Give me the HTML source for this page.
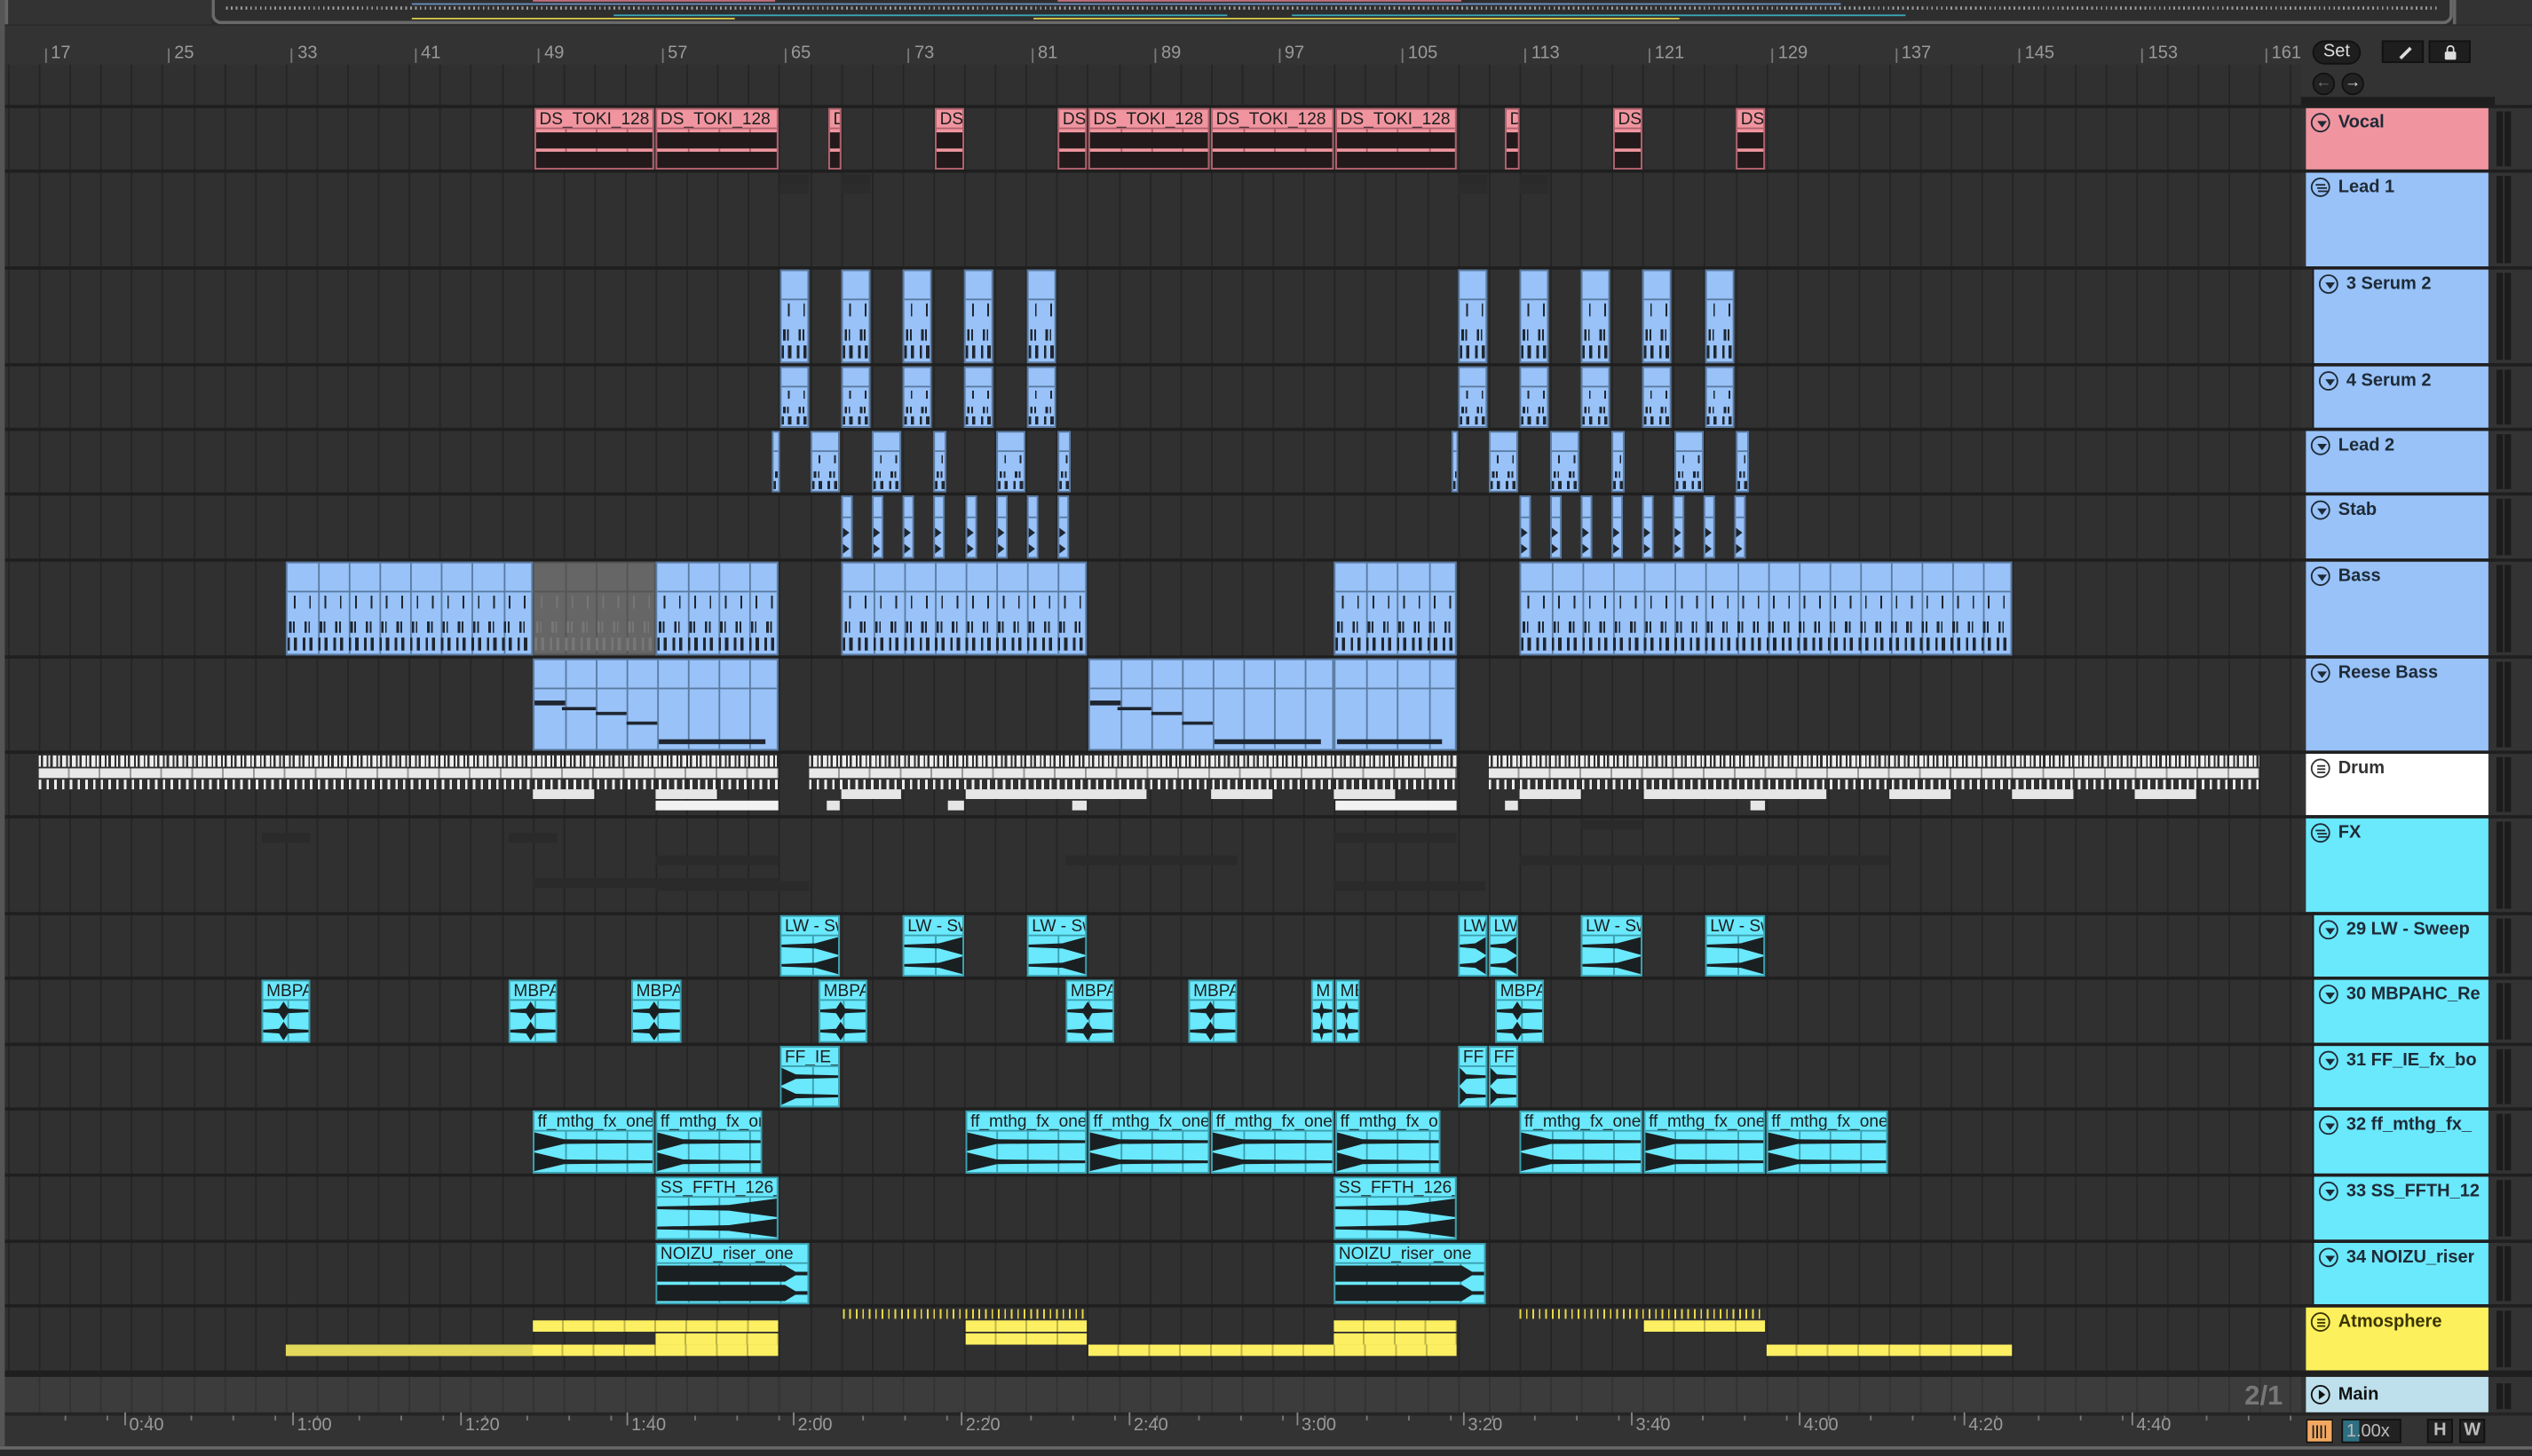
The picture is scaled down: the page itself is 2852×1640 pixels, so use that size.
<!DOCTYPE html>
<html><head><meta charset="utf-8">
<style>
html,body{margin:0;padding:0;background:#2a2a2a;overflow:hidden;width:2852px;height:1640px}
#w{position:absolute;left:0;top:0;width:1568px;height:902px;transform:scale(1.81888,1.81818);transform-origin:0 0;background:#333;font-family:"Liberation Sans",sans-serif;overflow:hidden}
.a{position:absolute;box-sizing:border-box}
.lbl{position:absolute;left:2px;top:0;font-size:10.5px;line-height:11px;color:#1d1d1d;white-space:nowrap;overflow:hidden;right:0}
.hd{font-weight:bold;font-size:11px;color:#1e2a36;white-space:nowrap;overflow:hidden}
.ico{position:absolute;width:12px;height:12px;border:1.2px solid #1f2b36;border-radius:50%;box-sizing:border-box}
.rl{position:absolute;top:27px;font-size:11px;color:#9a9a9a}
.rl:before{content:"";position:absolute;left:-4px;top:3px;width:1px;height:9px;background:#777}
.tl{position:absolute;top:877px;font-size:11px;color:#9a9a9a}
.tl:before{content:"";position:absolute;left:-3px;top:-2px;width:1px;height:8px;background:#888}
</style></head><body>
<div id="w"></div>
<script>
const W=document.getElementById('w');
function d(x,y,w,h,st,html){const e=document.createElement('div');e.className='a';e.style.cssText=`left:${x}px;top:${y}px;width:${w}px;height:${h}px;`+(st||'');if(html)e.innerHTML=html;W.appendChild(e);return e;}
const X0=24.5,CW=19.1;
d(0,0,1568,16,'background:#2b2b2b');
d(3,0,128,15,'background:#333;border-left:2px solid #666');
d(131,0,1388,15,'border:2px solid #6a6a6a;border-top:none;border-radius:0 0 6px 6px;background:#2e2e2e');
d(1519,0,49,15,'background:#333;border-left:2px solid #666');
d(140,4,1370,2,'background:repeating-linear-gradient(90deg,#ccc 0 1px,transparent 1px 3px);opacity:.7');
d(255,2,720,1,'background:#6a8fc0');d(760,2,380,1,'background:#6a8fc0');
d(255,11,200,1,'background:#d6c84a');d(640,11,400,1,'background:#d6c84a');
d(380,9,380,1,'background:#3aa7b8');d(800,9,380,1,'background:#3aa7b8');
d(330,0,150,1,'background:#c07080');d(655,0,250,1,'background:#c07080');
d(0,16,1428,24,'background:#333');
W.insertAdjacentHTML('beforeend','<div class="a" style="left:0;top:0;width:3px;height:902px;background:#555"></div>');
d(3,40,1422,813,'background:#303030');
for(let k=-1;k<75;k++){const x=X0+k*CW-0.5;if(x<3||x>1424)continue;d(x,40,1,835,'background:#252525');}
for(let b=17;b<=161;b+=8){const x=X0+(b-17)*9.55+7;W.insertAdjacentHTML('beforeend',`<div class="rl" style="left:${x}px">${b}</div>`);}
const P='#f0959f',B='#98c2f8',C='#6ae8fc',Y='#fcf05c';
const T=[[65,105,'Vocal',P,0,'tri'],[105,165,'Lead 1',B,0,'grp'],[165,225,'3 Serum 2',B,1,'tri'],[225,265,'4 Serum 2',B,1,'tri'],[265,305,'Lead 2',B,0,'tri'],[305,346,'Stab',B,0,'tri'],[346,406,'Bass',B,0,'tri'],[406,465,'Reese Bass',B,0,'tri'],[465,505,'Drum','#ffffff',0,'grp3'],[505,565,'FX',C,0,'grp'],[565,605,'29 LW - Sweep',C,1,'tri'],[605,646,'30 MBPAHC_Re',C,1,'tri'],[646,686,'31 FF_IE_fx_bo',C,1,'tri'],[686,727,'32 ff_mthg_fx_',C,1,'tri'],[727,768,'33 SS_FFTH_12',C,1,'tri'],[768,808,'34 NOIZU_riser',C,1,'tri'],[808,849,'Atmosphere',Y,0,'grp3']];
d(1425,40,143,862,'background:#333');
d(1425,60,120,5,'background:#1e1e1e');
T.forEach(t=>{
 const [y1,y2,n,c,ch,ic]=t;
 d(3,y1,1565,2,'background:#1f1f1f');
 const hx=ch?1433:1428;
 if(ch) d(1432,y1,2,y2-y1,'background:#1e1e1e');
 const col=n=='Drum'?'#333':(c==Y?'#3a3400':'#1e2a36');
 let svg='';
 if(ic=='tri') svg='<div style="position:absolute;left:2.5px;top:3.5px;width:0;height:0;border-left:3px solid transparent;border-right:3px solid transparent;border-top:4px solid '+col+'"></div>';
 else if(ic=='grp') svg='<div style="position:absolute;left:2px;top:3px;width:6px;height:1.2px;background:'+col+';box-shadow:1px 2px 0 '+col+',1.5px 4px 0 '+col+'"></div>';
 else svg='<div style="position:absolute;left:2.5px;top:2.5px;width:5px;height:1.2px;background:'+col+';box-shadow:0 2px 0 '+col+',0 4px 0 '+col+'"></div>';
 d(hx,y1+2,1541-hx,y2-y1-2,'background:'+c,`<div class="ico" style="left:3px;top:3px;border-color:${col}">${svg}</div><div class="hd" style="position:absolute;left:20px;top:3px;color:${col}">${n}</div>`);
 d(1546,y1+4,4,y2-y1-6,'background:#1c1c1c');d(1551,y1+4,4,y2-y1-6,'background:#1c1c1c');
});
d(3,849,1565,4,'background:#1f1f1f');
d(3,853,1422,22,'background:#3c3c3c');
for(let k=0;k<75;k++){const x=X0+k*CW-0.5;if(x>1424)break;d(x,853,1,22,'background:#333');}
d(1428,853,113,22,'background:#bde0ec','<div class="ico" style="left:3px;top:5px;border-color:#111"><div style="position:absolute;left:3.5px;top:2px;border-top:3px solid transparent;border-bottom:3px solid transparent;border-left:4.5px solid #111"></div></div><div class="hd" style="position:absolute;left:20px;top:5px;color:#111">Main</div>');
d(1546,857,4,16,'background:#1c1c1c');d(1551,857,4,16,'background:#1c1c1c');
d(1390,855,35,18,'','<div style="font-size:17px;color:#777;font-weight:bold">2/1</div>');
d(3,875,1565,27,'background:#333;border-top:2px solid #242424');
d(0,896,1568,6,'background:#2a2a2a;border-top:2px solid #666');
[['0:40',80],['1:00',184],['1:20',288],['1:40',391],['2:00',494],['2:20',598],['2:40',702],['3:00',806],['3:20',909],['3:40',1013],['4:00',1117],['4:20',1219],['4:40',1323]].forEach(a=>W.insertAdjacentHTML('beforeend',`<div class="tl" style="left:${a[1]}px">${a[0]}</div>`));
for(let x=40;x<1420;x+=26)d(x,877,1,3,'background:#777');
d(1432,25,30,15,'background:#1e1e1e;border:1px solid #111;border-radius:8px','<div style="font-size:11px;color:#ddd;text-align:center;line-height:13px">Set</div>');
d(1475,25,26,14,'background:#1e1e1e;border:1px solid #111','<div style="position:absolute;left:9px;top:6px;width:9px;height:1.5px;background:#ddd;transform:rotate(-45deg)"></div>');
d(1504,25,26,14,'background:#1e1e1e;border:1px solid #111','<div style="position:absolute;left:9px;top:6px;width:7px;height:5px;background:#ddd;border-radius:1px"></div><div style="position:absolute;left:10px;top:2px;width:3px;height:4px;border:1.2px solid #ddd;border-bottom:none;border-radius:3px 3px 0 0"></div>');
d(1432,45,14,14,'background:#222;border:1px solid #111;border-radius:50%','<div style="font-size:10px;color:#777;text-align:center;line-height:12px">&#x2190;</div>');
d(1450,45,14,14,'background:#222;border:1px solid #111;border-radius:50%','<div style="font-size:10px;color:#ddd;text-align:center;line-height:12px">&#x2192;</div>');
d(1428,879,17,15,'background:#f2a860;border:1px solid #111','<div style="position:absolute;left:3px;top:3px;width:9px;height:8px;background:repeating-linear-gradient(90deg,#222 0 1px,transparent 1px 2.5px)"></div>');
d(1450,879,37,15,'background:#222;border:1px solid #111','<div style="position:absolute;left:0;top:0;width:10px;height:13px;background:#2f6f82"></div><div style="position:absolute;left:2px;top:1px;font-size:11px;color:#bbb">1.00x</div>');
d(1503,879,16,15,'background:#222;border:1px solid #111','<div style="font-size:11px;color:#bbb;text-align:center;font-weight:bold">H</div>');
d(1523,879,16,15,'background:#222;border:1px solid #111','<div style="font-size:11px;color:#bbb;text-align:center;font-weight:bold">W</div>');

let POLYS='';const FULLS=[];
function lanePoly(type,x,y,w,h){
 if(type=='full'){FULLS.push([x,y+1,w,h-1]);return;}
 const cy=y+h/2,a=h/2;const X=f=>(x+f*w).toFixed(1);
 let pts;
 if(type=='sweep')pts=[[0,-.15],[.6,-.3],[1,-1],[1,1],[.6,.3],[0,.15]];
 else if(type=='fade')pts=[[0,-1],[.25,-.25],[1,-.15],[1,.15],[.25,.25],[0,1]];
 else if(type=='pinch')pts=[[0,-.15],[.35,-.25],[.45,-1],[.55,-.25],[1,-.15],[1,.15],[.55,.25],[.45,1],[.35,.25],[0,.15]];
 else pts=[[0,-.9],[.85,-.9],[.92,-.2],[1,-.2],[1,.2],[.92,.2],[.85,.9],[0,.9]];
 POLYS+=`<polygon fill="#1a2022" points="${pts.map(p=>X(p[0])+','+(cy+p[1]*a).toFixed(1)).join(' ')}"/>`;
}
function gridIn(x1,x2,col){let s='';for(let k=0;k<80;k++){const gx=X0+k*CW-0.5;if(gx>x1+1&&gx<x2-1)s+=`<div style="position:absolute;left:${gx-x1}px;top:0;bottom:0;width:1px;background:${col}"></div>`;}return s;}
function audio(x1,x2,y1,y2,col,lbl,type,bd){
 const w=x2-x1,h=y2-y1;const hh=Math.round(h*0.28);const bh=h-2-hh-1;
 d(x1,y1,w,h,`background:${col};border:1px solid ${bd};overflow:hidden`,
 `<div class="lbl" style="top:1px">${lbl}</div><div style="position:absolute;left:0;right:0;top:${hh}px;height:1px;background:${bd}"></div><div style="position:absolute;left:0;right:0;top:${hh+1}px;bottom:0">${gridIn(x1,x2,bd)}</div>`);
 const by=y1+1+hh+1,lh=bh/2;
 lanePoly(type,x1+1,by+0.5,w-2,lh-1);lanePoly(type,x1+1,by+lh+0.5,w-2,lh-1);
}
function midi(x1,x2,y1,y2,kind,muted){
 const w=x2-x1,h=y2-y1;const hh=Math.round(h*0.3);
 const bg=muted?'#666':B,bd=muted?'#555':'#5a7aa0',nc=muted?'#777':'#1f2630';
 let notes='';
 if(kind=='drumy'){
  notes=`<div style="position:absolute;left:0;right:0;top:${hh+3}px;height:${h*0.14}px;background:repeating-linear-gradient(90deg,transparent 0 4px,${nc} 4px 5px,transparent 5px 9.5px)"></div>
  <div style="position:absolute;left:0;right:0;top:${h*0.62}px;height:${h*0.13}px;background:repeating-linear-gradient(90deg,transparent 0 1px,${nc} 1px 2.5px,transparent 2.5px 3.5px,${nc} 3.5px 4.5px,transparent 4.5px 9.5px)"></div>
  <div style="position:absolute;left:0;right:0;top:${h*0.79}px;height:${h*0.14}px;background:repeating-linear-gradient(90deg,${nc} 0 1.5px,transparent 1.5px 4px,${nc} 4px 6px,transparent 6px 9.5px)"></div>`;
 } else if(kind=='stab'){
  notes=`<div style="position:absolute;left:0;top:${h*0.48}px;width:0;height:0;border-top:3px solid transparent;border-bottom:3px solid transparent;border-left:4px solid ${nc}"></div><div style="position:absolute;left:0;top:${h*0.75}px;width:0;height:0;border-top:3px solid transparent;border-bottom:3px solid transparent;border-left:4px solid ${nc}"></div>`;
 }
 return d(x1,y1,w,h,`background:${bg};border:1px solid ${bd};overflow:hidden`,`<div style="position:absolute;left:0;right:0;top:${hh}px;height:1px;background:${bd}"></div>${gridIn(x1,x2,bd)}${notes}`);
}
const pv=[[331,405,'DS_TOKI_128'],[406,482,'DS_TOKI_128'],[513,521,'D'],[579,597,'DS'],[655,673,'DS'],[674,749,'DS_TOKI_128'],[750,826,'DS_TOKI_128'],[827,902,'DS_TOKI_128'],[932,941,'D'],[999,1017,'DS'],[1075,1093,'DS']];
pv.forEach(c=>audio(c[0],c[1],67,105,P,c[2],'full','#b0606c'));
[[483,501],[521,539],[903,921],[941,959]].forEach(c=>{d(c[0],108,c[1]-c[0],6,'background:#2a2a2a');d(c[0],114,c[1]-c[0],6,'background:#2c2c2c')});
const s1=[[483,501],[521,539],[559,577],[597,615],[636,654],[903,921],[941,959],[979,997],[1017,1035],[1056,1074]];
s1.forEach(c=>{midi(c[0],c[1],167,225,'drumy');midi(c[0],c[1],227,265,'drumy');});
[[478,483],[502,520],[540,558],[578,586],[617,635],[655,663],[899,903],[922,940],[960,978],[998,1006],[1037,1055],[1075,1083]].forEach(c=>midi(c[0],c[1],267,305,'drumy'));
[521,540,559,578,598,617,636,655,941,960,979,998,1017,1036,1055,1074].forEach(x=>midi(x,x+7,307,346,'stab'));
[[177,330],[406,482],[521,673],[826,902],[941,1246]].forEach(c=>midi(c[0],c[1],348,406,'drumy'));
midi(330,406,348,406,'drumy',true);
function reese(x1,x2){const e=midi(x1,x2,408,465,'reese');const h=57;
 const segs=[[0,19,0.44],[17,38,0.5],[38,57,0.56],[57,76,0.66]];
 segs.forEach(s=>{e.insertAdjacentHTML('beforeend',`<div style="position:absolute;left:${s[0]}px;width:${s[1]-s[0]}px;top:${h*s[2]}px;height:2.5px;background:#1f2630"></div>`)});
 e.insertAdjacentHTML('beforeend',`<div style="position:absolute;left:77px;width:66px;top:${h*0.86}px;height:2.5px;background:#1f2630"></div>`);}
reese(330,482);reese(674,826);midi(826,902,408,465,'reese').insertAdjacentHTML('beforeend','<div style="position:absolute;left:1px;width:65px;top:49px;height:2.5px;background:#1f2630"></div>');
function drum(x1,x2){
 const w=x2-x1;
 d(x1,468,w,7,'background:repeating-linear-gradient(90deg,#eee 0 1.2px,transparent 1.2px 2.6px,#eee 2.6px 5px,transparent 5px 6px)');
 d(x1,476,w,6,'background:repeating-linear-gradient(90deg,#e8e8e8 0 18px,#999 18px 19.1px)');
 d(x1,483,w,6,'background:repeating-linear-gradient(90deg,#eee 0 1.5px,transparent 1.5px 4.8px)');
}
drum(24,482);drum(501,902);drum(922,1399);
[[330,368],[406,444],[521,558],[598,710],[750,788],[826,864],[941,979],[1018,1131],[1170,1208],[1246,1284],[1322,1360]].forEach(c=>d(c[0],489,c[1]-c[0],6,'background:#e6e6e6'));
[[406,482],[827,902]].forEach(c=>d(c[0],496,c[1]-c[0],6,'background:#f2f2f2'));
[[512,520],[587,597],[664,673],[932,940],[1084,1093]].forEach(c=>d(c[0],496,c[1]-c[0],6,'background:#e6e6e6'));
[[162,192,516],[315,345,516],[406,482,530],[330,482,544],[406,501,546],[826,920,546],[660,766,530],[826,902,516],[941,1170,530],[979,1017,508]].forEach(c=>d(c[0],c[2],c[1]-c[0],6,'background:#2a2a2a'));
[[483,520],[559,597],[636,673],[903,921],[922,940],[979,1017],[1056,1093]].forEach(c=>audio(c[0],c[1],567,605,C,c[1]-c[0]>20?'LW - Sweep':'LW','sweep','#3a9fae'));
[[162,192],[315,345],[391,422],[507,537],[660,690],[736,766],[812,826],[827,842],[926,956]].forEach(c=>audio(c[0],c[1],607,646,C,c[1]-c[0]>20?'MBPAHC':(c[0]==812?'M':'MB'),'pinch','#3a9fae'));
[[483,520],[903,921],[922,940]].forEach(c=>audio(c[0],c[1],648,686,C,c[1]-c[0]>20?'FF_IE_':'FF','fade','#3a9fae'));
[[330,405],[406,472],[598,673],[674,749],[750,826],[827,892],[941,1017],[1018,1093],[1094,1169]].forEach(c=>audio(c[0],c[1],688,727,C,'ff_mthg_fx_one','fade','#3a9fae'));
[[406,482],[826,902]].forEach(c=>audio(c[0],c[1],729,768,C,'SS_FFTH_126_','sweep','#3a9fae'));
[[406,501],[826,920]].forEach(c=>audio(c[0],c[1],770,808,C,'NOIZU_riser_one','rise','#3a9fae'));
FULLS.forEach(f=>d(f[0],f[1],f[2],f[3],'background:#231a1c'));
W.insertAdjacentHTML('beforeend',`<svg width="1568" height="902" style="position:absolute;left:0;top:0;pointer-events:none">${POLYS}</svg>`);
[[522,672],[941,1093]].forEach(c=>d(c[0],811,c[1]-c[0],6,'background:repeating-linear-gradient(90deg,#e8d84a 0 1px,transparent 1px 4px)'));
const ay=[[330,482,818],[598,673,818],[1018,1093,818],[406,482,826],[598,673,826],[826,902,826],[826,902,818],[177,482,833],[674,902,833],[1094,1246,833]];
ay.forEach(c=>d(c[0],c[2],c[1]-c[0],7,'background:repeating-linear-gradient(90deg,#fcef62 0 18px,#bfb446 18px 19.1px)'));
d(177,833,153,7,'background:#e2d85a');
</script>
</body></html>
